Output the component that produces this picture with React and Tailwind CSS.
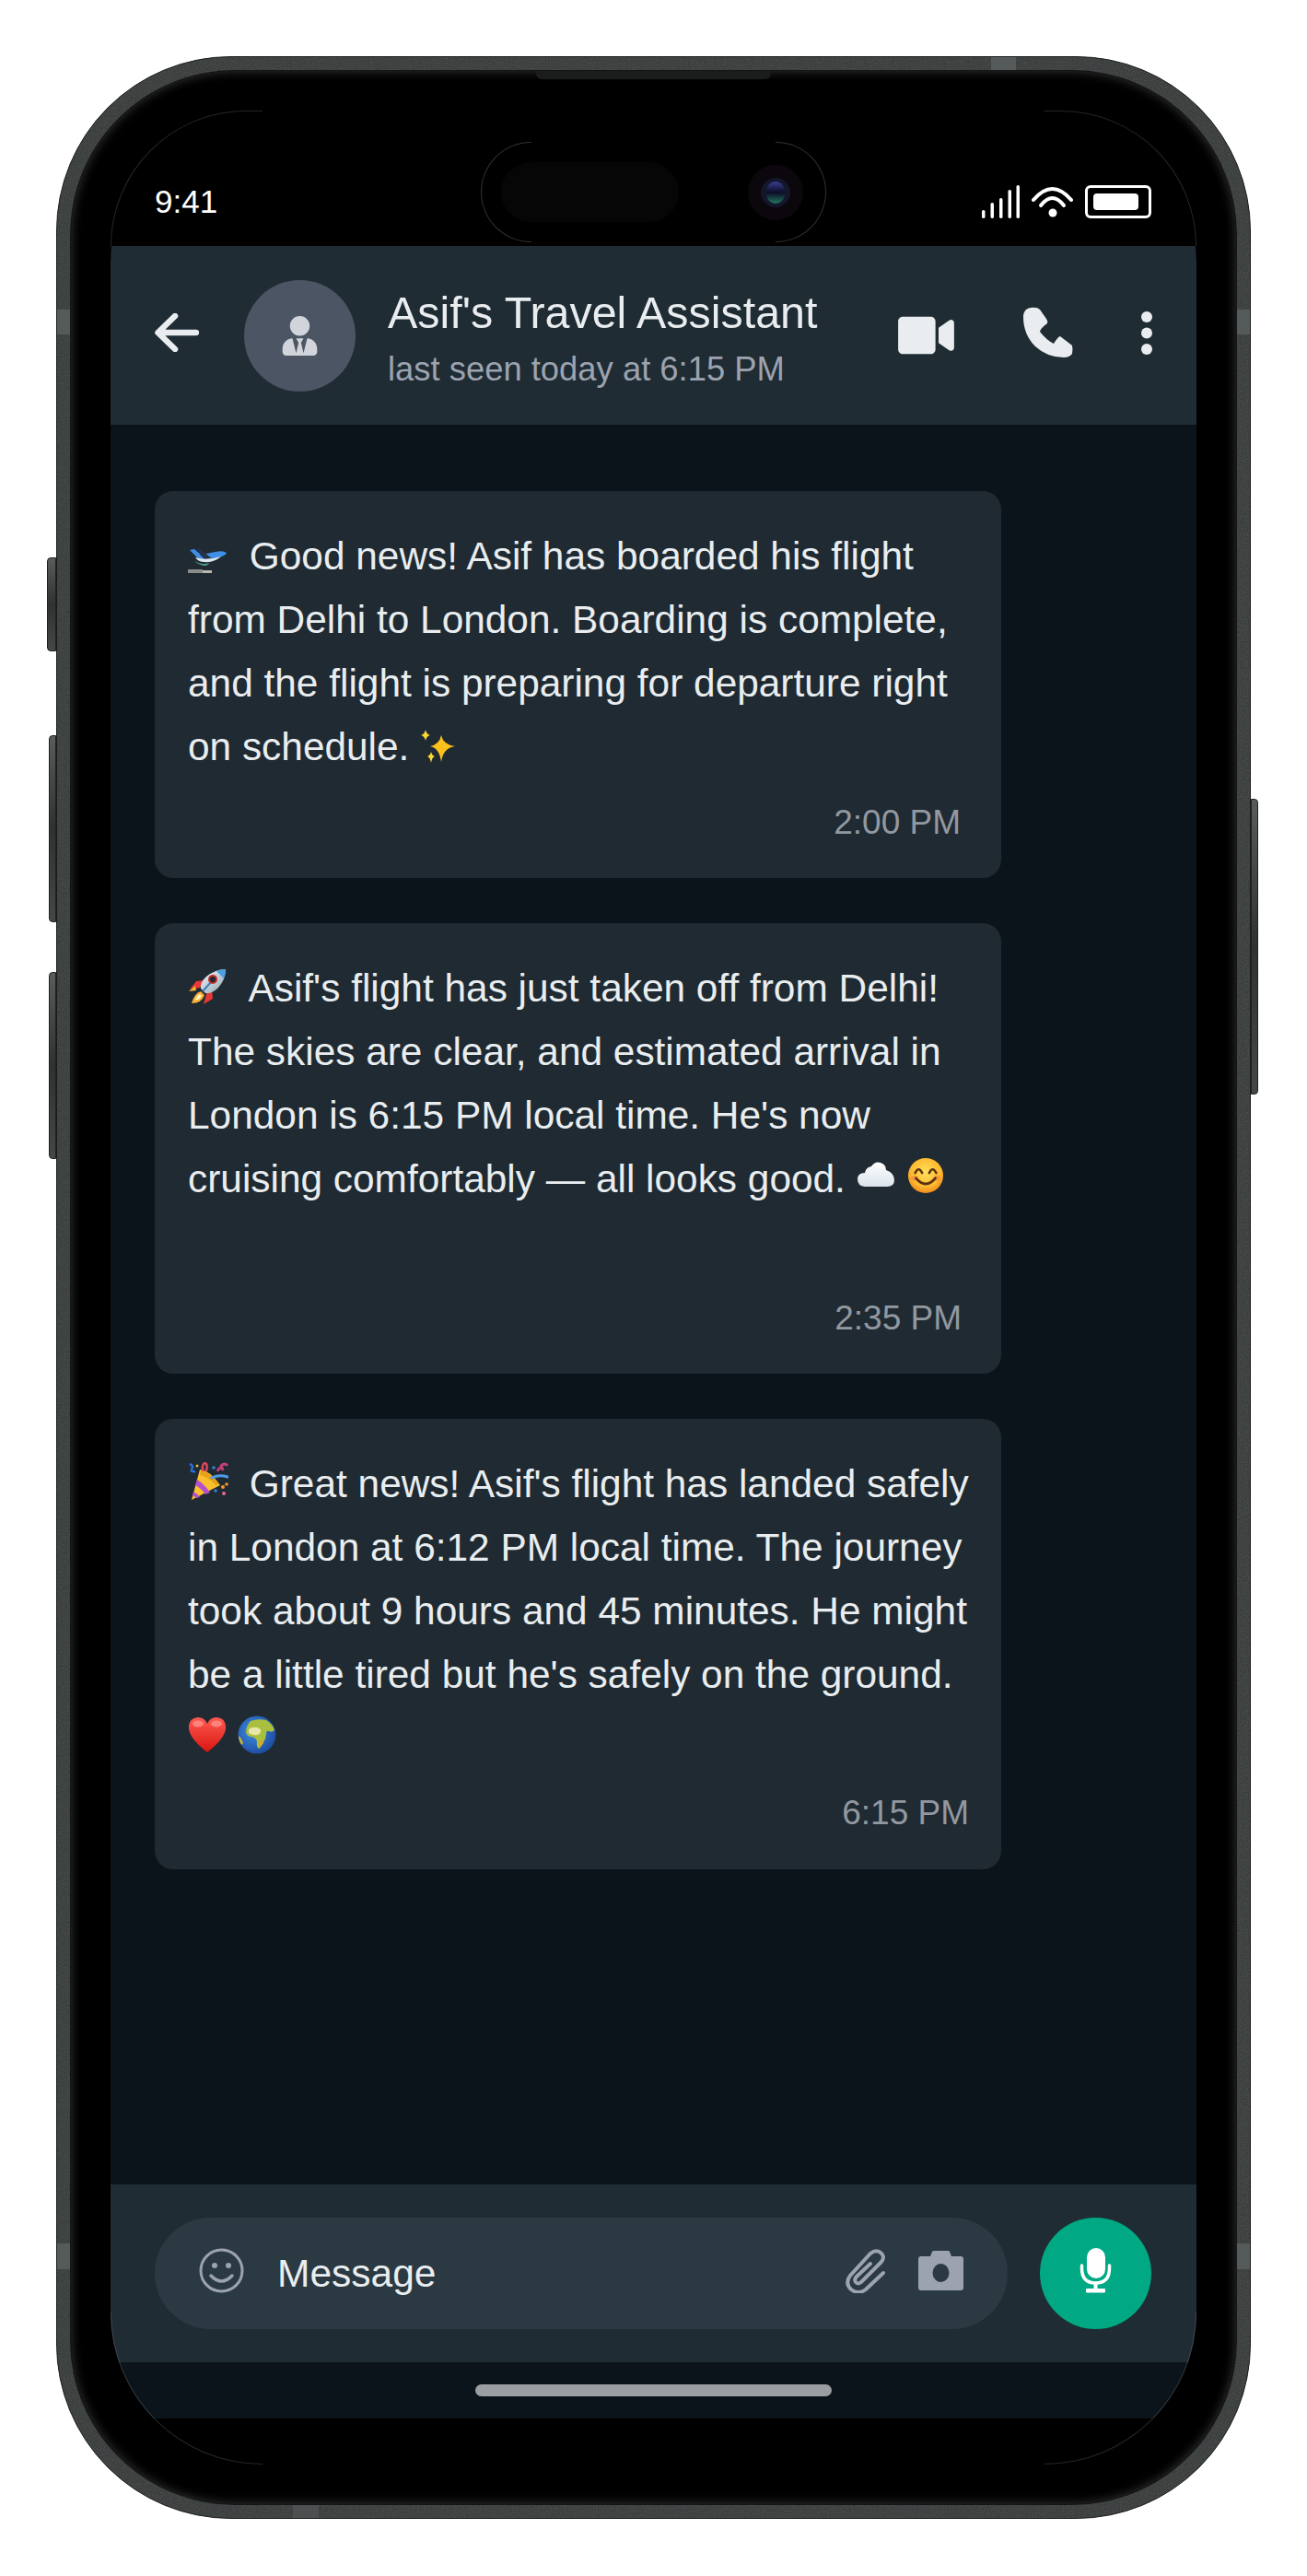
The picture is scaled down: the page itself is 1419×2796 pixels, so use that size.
import { FaUserTie, FaVideo } from "react-icons/fa";

const sans = { fontFamily: '"Liberation Sans", Arial, sans-serif' };

function Plane() {
  return (
    <svg viewBox="0 0 42 42" className="inline-block w-[42px] h-[42px] align-[-8px] mr-[13px]">
      <path d="M2 13 L7 12 L14 18 L30 15 Q40 13 42 17 Q36 22 24 23 L12 23 Z" fill="#3f8fe6" />
      <path d="M10 11 L13 11 L22 19 L26 22 L18 23 L13 18 Z" fill="#26324a" />
      <path d="M8 21 Q20 25 36 20 Q28 27 18 26 Q11 26 8 21Z" fill="#dfe8ea" />
      <path d="M6 24 Q14 30 24 27 L20 30 Q12 30 6 24Z" fill="#4f9e8f" />
      <rect x="0" y="34" width="16" height="4" fill="#8b8d8c" />
      <rect x="16" y="35" width="10" height="3" fill="#b9b7ae" />
    </svg>
  );
}

function Sparkles() {
  return (
    <svg viewBox="0 0 40 40" className="inline-block w-[40px] h-[40px] align-[-5px]">
      <path d="M23 8 Q25 18 38 20 Q25 22 23 37 Q21 22 11 20 Q21 18 23 8Z" fill="#fcc21b" />
      <path d="M6 2 Q7 7 11 8 Q7 9 6 14 Q5 9 1 8 Q5 7 6 2Z" fill="#fdd835" />
      <path d="M12 26 Q13 30 16 31 Q13 32 12 38 Q11 32 8 31 Q11 30 12 26Z" fill="#fdd835" />
    </svg>
  );
}

function Rocket() {
  return (
    <svg viewBox="0 0 42 42" className="inline-block w-[42px] h-[42px] align-[-6px] mr-[14px]">
      <defs>
        <linearGradient id="rocketBody" x1="0" y1="0" x2="1" y2="1">
          <stop offset="0" stopColor="#f4f7f8" />
          <stop offset="1" stopColor="#8ea3b3" />
        </linearGradient>
      </defs>
      <path d="M19 13 L9 14 L2 23 L13 21Z" fill="#e53935" />
      <path d="M26 23 L27 33 L17 39 L20 28Z" fill="#e53935" />
      <path d="M8 19 L1 25 L9 24Z" fill="#fbb033" />
      <path d="M14 25 Q7 27 4 38 Q15 38 18 29 Z" fill="#fbb033" />
      <path d="M13 28 Q9 30 8 35 Q13 34 15 30 Z" fill="#fff6c2" />
      <path d="M41 1 Q30 1 20 9 Q13 15 14 22 L19 27 Q26 28 33 21 Q41 12 41 1Z" fill="url(#rocketBody)" />
      <path d="M41 1 Q35 1 31 3 L39 11 Q41 7 41 1Z" fill="#4a9fe0" />
      <path d="M16 25 L25 15" stroke="#3f7fb5" strokeWidth="2" />
      <circle cx="27" cy="12" r="5" fill="#c62828" />
      <circle cx="27" cy="12" r="3" fill="#1b2a33" />
    </svg>
  );
}

function Cloud() {
  return (
    <svg viewBox="0 0 42 42" className="inline-block w-[42px] h-[42px] align-[-2px]">
      <defs>
        <linearGradient id="cloudFill" x1="0" y1="0" x2="0" y2="1">
          <stop offset="0" stopColor="#ffffff" />
          <stop offset="1" stopColor="#dbe3ea" />
        </linearGradient>
      </defs>
      <path d="M9 34 Q1 33 1 26 Q1 19 9 19 Q10 13 16 12 Q20 6 26 8 Q32 10 32 16 Q41 19 41 27 Q41 34 33 34Z" fill="url(#cloudFill)" />
    </svg>
  );
}

function Smile() {
  return (
    <svg viewBox="0 0 42 42" className="inline-block w-[40px] h-[40px] align-[-2px] ml-[2px]">
      <defs>
        <radialGradient id="smileFace" cx="0.5" cy="0.4" r="0.6">
          <stop offset="0" stopColor="#ffdf5e" />
          <stop offset="0.7" stopColor="#fdb92e" />
          <stop offset="1" stopColor="#f08a1d" />
        </radialGradient>
      </defs>
      <circle cx="21" cy="21" r="20" fill="url(#smileFace)" />
      <ellipse cx="8" cy="24" rx="4" ry="3" fill="#f59a3c" />
      <ellipse cx="34" cy="24" rx="4" ry="3" fill="#f59a3c" />
      <path d="M9 18 Q13 10 17 18 M25 18 Q29 10 33 18" stroke="#5d3211" strokeWidth="2.6" fill="none" strokeLinecap="round" />
      <path d="M10 24 Q21 37 32 24" stroke="#5d3211" strokeWidth="3" fill="none" strokeLinecap="round" />
    </svg>
  );
}

function Party() {
  return (
    <svg viewBox="0 0 44 42" className="inline-block w-[44px] h-[42px] align-[-4px] mr-[11px]">
      <path d="M4 41 L13 8 Q24 9 35 25 Z" fill="#fbc02d" />
      <path d="M10 19 Q18 24 24 33 L19 35 Q14 28 8 25 Z" fill="#b44fd0" />
      <path d="M6 32 Q10 34 13 38 L9 39 Q7 37 5 36 Z" fill="#b44fd0" />
      <path d="M14 9 Q26 12 34 24 L30 25 Q22 16 13 14Z" fill="#e8a21a" />
      <path d="M17 10 Q14 4 18 1 Q22 1 20 10" stroke="#e0455c" strokeWidth="2.5" fill="none" />
      <path d="M26 17 Q34 13 43 16" stroke="#4f9be8" strokeWidth="3" fill="none" strokeLinecap="round" />
      <path d="M32 10 Q34 5 37 7 Q39 10 36 4 Q40 0 43 4" stroke="#c2407a" strokeWidth="2.8" fill="none" />
      <path d="M2 2 Q7 4 4 8 Q3 11 8 10" stroke="#2f6fd6" strokeWidth="2.5" fill="none" />
      <circle cx="28" cy="6" r="1.8" fill="#3a7fd5" />
      <circle cx="10" cy="4" r="1.5" fill="#f2b632" />
      <circle cx="38" cy="27" r="2" fill="#ef9a2e" />
      <circle cx="42" cy="24" r="1.8" fill="#ef9a2e" />
      <circle cx="39" cy="34" r="2" fill="#e86a9a" />
      <circle cx="30" cy="31" r="1.8" fill="#3a7fd5" />
    </svg>
  );
}

function Heart() {
  return (
    <svg viewBox="0 0 42 42" className="inline-block w-[42px] h-[42px] align-[-3px] mr-[12px]">
      <defs>
        <linearGradient id="heartFill" x1="0" y1="0" x2="0" y2="1">
          <stop offset="0" stopColor="#ff5a52" />
          <stop offset="1" stopColor="#d8160f" />
        </linearGradient>
      </defs>
      <path d="M21 40 Q3 26 1 15 Q0 3 11 2 Q18 2 21 9 Q24 2 31 2 Q42 3 41 15 Q39 26 21 40Z" fill="url(#heartFill)" />
      <ellipse cx="11" cy="9" rx="6" ry="3.5" fill="#ff9a92" opacity="0.7" />
      <ellipse cx="31" cy="9" rx="6" ry="3.5" fill="#ff9a92" opacity="0.7" />
    </svg>
  );
}

function Globe() {
  return (
    <svg viewBox="0 0 42 42" className="inline-block w-[42px] h-[42px] align-[-3px]">
      <defs>
        <radialGradient id="globeSea" cx="0.4" cy="0.4" r="0.65">
          <stop offset="0" stopColor="#3f8fe8" />
          <stop offset="1" stopColor="#1d4a9c" />
        </radialGradient>
      </defs>
      <circle cx="21" cy="21" r="20.5" fill="url(#globeSea)" />
      <path d="M14 6 Q22 3 31 5 Q38 9 40 16 Q37 19 34 17 Q31 16 31 20 Q31 25 28 29 Q25 35 23 36 Q20 34 21 28 Q19 23 14 23 Q9 22 9 17 Q10 10 14 6Z" fill="#a9bf3e" />
      <path d="M12 15 Q17 11 24 14 Q27 18 22 21 Q16 22 12 19Z" fill="#e8e6a8" />
      <path d="M24 27 Q28 26 28 30 Q25 34 23 35Z" fill="#d9a62e" />
      <path d="M1 22 Q4 24 6 30 Q5 33 3 30 Q1 26 1 22Z" fill="#c8b23a" />
    </svg>
  );
}

function Bubble({ children, time, pr, mt, pb }) {
  return (
    <div className={`bg-[#1f2a32] rounded-[20px] w-[919px] pl-[36px] pt-[36px] ${pr} ${pb}`}>
      <div className="text-[#e9edef] text-[42.4px] leading-[69px] whitespace-nowrap">{children}</div>
      <div className={`text-right text-[#9298a0] text-[37px] leading-[44px] ${mt}`}>{time}</div>
    </div>
  );
}

function SideButton({ className }) {
  return <div className={`absolute bg-linear-to-b from-[#5a5c5c] via-[#303232] to-[#454747] border border-[#1f2020] ${className}`}></div>;
}

export default function App() {
  return (
    <div className="bg-white h-[2796px] pt-[61px] pl-[61px]" style={sans}>
      <div className="relative w-[1297px] h-[2673px]">
        <SideButton className="-left-[10px] top-[544px] w-[10px] h-[102px] rounded-l-[4px]" />
        <SideButton className="-left-[8px] top-[737px] w-[8px] h-[203px] rounded-l-[4px]" />
        <SideButton className="-left-[8px] top-[994px] w-[8px] h-[203px] rounded-l-[4px]" />
        <SideButton className="-right-[8px] top-[806px] w-[8px] h-[321px] rounded-r-[4px]" />

        <div className="relative h-full rounded-[190px] bg-[#2f3232] border border-[#1a1b1b] p-[15px] overflow-hidden">
          <svg className="absolute inset-0 w-full h-full opacity-25">
            <filter id="metalNoise">
              <feTurbulence type="fractalNoise" baseFrequency="0.9" numOctaves="2" />
              <feColorMatrix type="saturate" values="0" />
            </filter>
            <rect width="100%" height="100%" filter="url(#metalNoise)" />
          </svg>
          <div className="absolute top-0 left-[1014px] w-[27px] h-[16px] bg-[#555a5a]"></div>
          <div className="absolute bottom-0 left-[256px] w-[28px] h-[16px] bg-[#4c5050]"></div>
          <div className="absolute top-[274px] left-0 w-[16px] h-[27px] bg-[#555a5a]"></div>
          <div className="absolute top-[2373px] left-0 w-[16px] h-[28px] bg-[#555a5a]"></div>
          <div className="absolute top-[274px] right-0 w-[16px] h-[27px] bg-[#555a5a]"></div>
          <div className="absolute top-[2373px] right-0 w-[16px] h-[28px] bg-[#555a5a]"></div>

          <div className="relative h-full rounded-[178px] bg-black p-[43px] shadow-[inset_0_0_12px_rgba(80,80,80,0.7)] ring-1 ring-[#141515]">
            <div className="absolute top-0 left-[505px] w-[255px] h-[9px] rounded-b-[6px] bg-[#1b1c1c]"></div>

            <div className="h-full rounded-[165px] overflow-hidden flex flex-col bg-black">
              <div className="relative h-[147px] shrink-0 flex items-start justify-between pl-[48px] pr-[49px] pt-[79px] text-white">
                <div className="text-[35px] leading-[40px]">9:41</div>
                <div className="flex items-center gap-[13px] h-[40px]">
                  <svg viewBox="0 0 42 36" className="w-[42px] h-[36px]">
                    <g fill="#fff">
                      <rect x="1" y="27" width="3.5" height="9" rx="1.7" />
                      <rect x="10.5" y="19" width="3.5" height="17" rx="1.7" />
                      <rect x="20" y="14" width="3.5" height="22" rx="1.7" />
                      <rect x="29.5" y="5" width="3.5" height="31" rx="1.7" />
                      <rect x="38.5" y="0" width="3.5" height="36" rx="1.7" />
                    </g>
                  </svg>
                  <svg viewBox="0 0 45 33" className="w-[45px] h-[33px]">
                    <path d="M2 14 Q22.5 -10 43 14" stroke="#fff" strokeWidth="4" fill="none" strokeLinecap="round" />
                    <path d="M10 20 Q22.5 4 35 20" stroke="#fff" strokeWidth="4" fill="none" strokeLinecap="round" />
                    <circle cx="23" cy="28" r="4.5" fill="#fff" />
                  </svg>
                  <div className="w-[72px] h-[36px] border-[3px] border-white rounded-[6px] pl-[6px] pr-[11px] py-[6px]">
                    <div className="h-full rounded-[4px] bg-white"></div>
                  </div>
                </div>
                <div className="absolute left-[402px] top-[34px] w-[375px] h-[109px] flex items-center">
                  <div className="absolute left-0 top-0 w-[55px] h-[109px] border-l border-t border-b border-white/20 rounded-l-[55px]"></div>
                  <div className="absolute right-0 top-0 w-[55px] h-[109px] border-r border-t border-b border-white/20 rounded-r-[55px]"></div>
                  <div className="ml-[22px] w-[193px] h-[65px] rounded-full bg-[#060606]"></div>
                  <div className="ml-[75px] w-[60px] h-[60px] rounded-full bg-[#0c070c] flex items-center justify-center">
                    <div className="w-[32px] h-[32px] rounded-full bg-[#14162b] flex items-center justify-center">
                      <div className="w-[20px] h-[24px] rounded-full bg-linear-to-b from-[#3d3f90] via-[#0c0c28] to-[#1f7a5c]"></div>
                    </div>
                  </div>
                </div>
              </div>

              <div className="h-[194px] shrink-0 bg-[#1f2c34] flex items-center pl-[48px] pr-[48px]">
                <svg viewBox="0 0 48 42" className="w-[48px] h-[42px] mb-[6px]">
                  <path d="M45 21 H4 M22 3 L3.5 21 L22 39" stroke="#e9edef" strokeWidth="6.5" fill="none" strokeLinecap="round" strokeLinejoin="round" />
                </svg>
                <div className="ml-[49px] w-[121px] h-[121px] rounded-full bg-[#4b5563] flex items-center justify-center">
                  <FaUserTie className="w-[43px] h-[43px] text-[#d1d5db]" />
                </div>
                <div className="ml-[35px] flex-1 pt-[6px]">
                  <div className="text-[#e9edef] text-[48.4px] leading-[56px]">Asif's Travel Assistant</div>
                  <div className="mt-[12px] text-[#9ca3af] text-[36.4px] leading-[44px]">last seen today at 6:15 PM</div>
                </div>
                <FaVideo className="w-[61px] h-[54px] text-[#e9edef]" />
                <svg viewBox="0 0 54 55" className="ml-[75px] w-[54px] h-[55px] mb-[7px]">
                  <path d="M8 1 Q6 1 3 3 Q0 6 0 11 Q0 30 13 43 Q26 55 44 55 Q50 55 53 51 Q54 46 53 42 L40 32 Q38 32 33 40 Q25 36 18 27 Q18 24 26 18 Q27 16 25 13 L18 3 Q15 0 8 1Z" fill="#e9edef" />
                </svg>
                <svg viewBox="0 0 12 47" className="ml-[74px] w-[12px] h-[47px] mb-[5px]">
                  <circle cx="6" cy="6" r="6" fill="#e9edef" />
                  <circle cx="6" cy="23.5" r="6" fill="#e9edef" />
                  <circle cx="6" cy="41" r="6" fill="#e9edef" />
                </svg>
              </div>

              <div className="flex-1 bg-[#0b141a] pl-[48px] pt-[72px] flex flex-col gap-[49px]">
                <Bubble time="2:00 PM" pr="pr-[44px]" mt="mt-[26px]" pb="pb-[38px]">
                  <Plane /> Good news! Asif has boarded his flight<br />
                  from Delhi to London. Boarding is complete,<br />
                  and the flight is preparing for departure right<br />
                  on schedule. <Sparkles />
                </Bubble>
                <Bubble time="2:35 PM" pr="pr-[43px]" mt="mt-[95px]" pb="pb-[38px]">
                  <Rocket /> Asif's flight has just taken off from Delhi!<br />
                  The skies are clear, and estimated arrival in<br />
                  London is 6:15 PM local time. He's now<br />
                  cruising comfortably — all looks good. <Cloud /> <Smile />
                </Bubble>
                <Bubble time="6:15 PM" pr="pr-[35px]" mt="mt-[25px]" pb="pb-[39px]">
                  <Party /> Great news! Asif's flight has landed safely<br />
                  in London at 6:12 PM local time. The journey<br />
                  took about 9 hours and 45 minutes. He might<br />
                  be a little tired but he's safely on the ground.<br />
                  <Heart /><Globe />
                </Bubble>
              </div>

              <div className="h-[193px] shrink-0 bg-[#1f2c34] flex items-center pl-[48px] pr-[49px]">
                <div className="w-[926px] h-[121px] rounded-full bg-[#2a3942] flex items-center pl-[48px] pr-[48px]">
                  <svg viewBox="0 0 49 49" className="w-[49px] h-[49px] mb-[6px]">
                    <circle cx="24.5" cy="24.5" r="22.5" stroke="#9ca3af" strokeWidth="3" fill="none" />
                    <circle cx="17" cy="19" r="3" fill="#9ca3af" />
                    <circle cx="32" cy="19" r="3" fill="#9ca3af" />
                    <path d="M13 30 Q24.5 42 36 30" stroke="#9ca3af" strokeWidth="3.5" fill="none" strokeLinecap="round" />
                  </svg>
                  <div className="ml-[36px] flex-1 text-[#e9edef] text-[42.5px]">Message</div>
                  <svg viewBox="0 0 43 48" className="w-[43px] h-[48px] mb-[5px]">
                    <path d="M41 26 L22 44 Q14 50 6 44 Q-1 37 5 29 L27 5 Q33 0 38 4 Q44 9 38 15 L17 36 Q13 39 11 36 Q9 33 12 30 L27 16" stroke="#9ca3af" strokeWidth="4" fill="none" strokeLinecap="round" />
                  </svg>
                  <svg viewBox="0 0 49 43" className="ml-[36px] w-[49px] h-[43px] mb-[6px]">
                    <path d="M13 6 L15 1 Q15.5 0 17 0 H32 Q33.5 0 34 1 L36 6 H46 Q49 6 49 9 V40 Q49 43 46 43 H3 Q0 43 0 40 V9 Q0 6 3 6Z" fill="#9ca3af" />
                    <ellipse cx="24.5" cy="24" rx="9" ry="10" fill="#2a3942" />
                  </svg>
                </div>
                <div className="ml-auto w-[121px] h-[121px] rounded-full bg-[#00a884] flex items-center justify-center">
                  <svg viewBox="0 0 35 49" className="w-[35px] h-[49px] mb-[6px]">
                    <rect x="8" y="0" width="20" height="33" rx="10" fill="#fff" />
                    <path d="M2.5 19 V22 Q2.5 38 17.5 38 Q32.5 38 32.5 22 V19" stroke="#fff" strokeWidth="3.5" fill="none" strokeLinecap="round" />
                    <rect x="15.5" y="38" width="4" height="7" fill="#fff" />
                    <rect x="7" y="44" width="21" height="4.5" rx="1" fill="#fff" />
                  </svg>
                </div>
              </div>

              <div className="h-[61px] shrink-0 bg-[#0b141a] flex items-center justify-center">
                <div className="w-[387px] h-[13px] rounded-full bg-[#9b9fa1]"></div>
              </div>
              <div className="h-[50px] shrink-0 bg-black"></div>
            </div>

            <div className="absolute left-[43px] top-[43px] w-[165px] h-[147px] border-l border-t border-white/15 rounded-tl-[165px]"></div>
            <div className="absolute right-[43px] top-[43px] w-[165px] h-[147px] border-r border-t border-white/15 rounded-tr-[165px]"></div>
            <div className="absolute left-[43px] bottom-[43px] w-[165px] h-[165px] border-l border-b border-white/15 rounded-bl-[165px]"></div>
            <div className="absolute right-[43px] bottom-[43px] w-[165px] h-[165px] border-r border-b border-white/15 rounded-br-[165px]"></div>
          </div>
        </div>
      </div>
    </div>
  );
}
